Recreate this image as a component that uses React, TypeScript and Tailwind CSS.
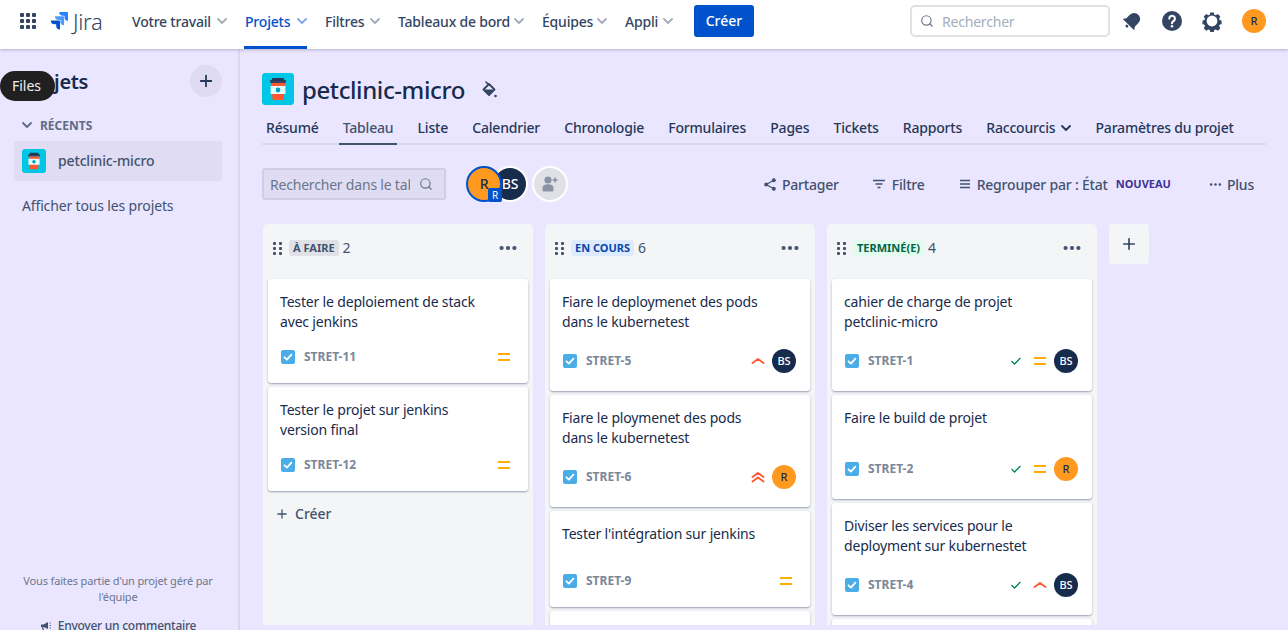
import { Plus, Search, MoreHorizontal } from "lucide-react";

const FONT = "font-['Noto_Sans',sans-serif]";

const Cup = ({ size }: { size: number }) => (
  <svg width={size} height={size} viewBox="0 0 32 32" className="shrink-0 rounded-[3px]">
    <rect width="32" height="32" rx="2" fill="#00C7E6" />
    <rect x="8" y="7" width="16" height="3" rx="1" fill="#344563" />
    <rect x="10" y="5" width="12" height="3" rx="1" fill="#253858" />
    <path d="M9 10h14l-1.600 17H10.600z" fill="#FF5630" />
    <rect x="8.600" y="13" width="14.800" height="8" fill="#E6FCFF" />
    <circle cx="16" cy="17" r="2.400" fill="#00A3BF" />
  </svg>
);

const Chevron = ({ color = "#A5ADBA" }: { color?: string }) => (
  <svg width="10" height="8" viewBox="0 0 10 8" className="shrink-0">
    <path d="M1 2l4 4 4-4" fill="none" stroke={color} strokeWidth="1.800" strokeLinecap="round" strokeLinejoin="round" />
  </svg>
);

const NavItem = ({ label, w, active }: { label: string; w: string; active?: boolean }) => (
  <div className={`relative flex h-[42px] items-center justify-between text-sm font-medium ${w} ${active ? "text-[#0052CC]" : "text-[#344563]"}`}>
    <span className="pt-[2px] tracking-[-0.2px]">{label}</span>
    <Chevron color={active ? "#7FA8E5" : "#A5ADBA"} />
    {active && <div className="absolute -bottom-[7px] -left-px right-0 h-[3px] bg-[#0052CC]" />}
  </div>
);

const TopBar = () => (
  <header className="relative z-10 flex h-[49px] shrink-0 items-center bg-white pr-[22px] pb-[7px] pl-5 shadow-[0_1px_3px_rgba(9,30,66,0.25)]">
    <div className="grid w-4 grid-cols-3 gap-[2px]">
      {Array.from({ length: 9 }).map((_, i) => (
        <span key={i} className="h-1 w-1 rounded-[1px] bg-[#344563]" />
      ))}
    </div>
    <svg width="18" height="18" viewBox="0 0 18 18" className="ml-[14px]">
      <path d="M17.500 0H9.200a3.800 3.800 0 0 0 3.800 3.800h1.500v1.500A3.800 3.800 0 0 0 18 9V.6z" fill="#2684FF" />
      <path d="M13.400 4.200H5a3.800 3.800 0 0 0 3.800 3.800h1.600v1.400a3.800 3.800 0 0 0 3.700 3.800V4.900z" fill="#4C9AFF" />
      <path d="M9.200 8.400H.8a3.800 3.800 0 0 0 3.800 3.800h1.600v1.500A3.800 3.800 0 0 0 10 17.500V9.100z" fill="#0052CC" />
    </svg>
    <span className="ml-[5px] w-[29px] text-[22px] leading-none font-light tracking-[-0.3px] text-[#344563]">Jira</span>
    <div className="ml-[30px] flex items-center gap-[18px]">
      <NavItem label="Votre travail" w="w-[95px]" />
      <NavItem label="Projets" w="w-[62px]" active />
      <NavItem label="Filtres" w="w-[55px]" />
      <NavItem label="Tableaux de bord" w="w-[126px]" />
      <NavItem label="Équipes" w="w-[65px]" />
      <NavItem label="Appli" w="w-[48px]" />
    </div>
    <button className="ml-[21px] h-8 w-[60px] rounded-[3px] bg-[#0052CC] text-sm font-medium text-white">Créer</button>
    <div className="ml-auto flex h-8 w-[200px] items-center rounded-[5px] border-2 border-[#DFE1E6] bg-white pl-2">
      <Search size={14} className="text-[#6B778C]" />
      <span className="ml-2 pt-[2px] text-sm tracking-[-0.2px] text-[#A5ADBA]">Rechercher</span>
    </div>
    <svg width="24" height="24" viewBox="0 0 24 24" className="ml-[10px]">
      <g transform="rotate(45 12 12)" fill="#344563">
        <path d="M12 3a6 6 0 0 0-6 6v5l-2 3h16l-2-3V9a6 6 0 0 0-6-6z" />
        <rect x="10.500" y="18" width="3" height="2.500" rx="1.200" />
      </g>
    </svg>
    <svg width="24" height="24" viewBox="0 0 24 24" className="ml-4">
      <circle cx="12" cy="12" r="10" fill="#344563" />
      <path d="M9.300 9.600a2.800 2.800 0 1 1 4.300 2.400c-1 .6-1.600 1.100-1.600 2.200" fill="none" stroke="#fff" strokeWidth="2.100" strokeLinecap="round" />
      <circle cx="12" cy="17.300" r="1.300" fill="#fff" />
    </svg>
    <svg width="24" height="24" viewBox="0 0 24 24" className="ml-4">
      <path d="M10 2.500h4l.6 2.700 1.700.7 2.400-1.400 2.800 2.800-1.400 2.400.7 1.700 2.200.6v4l-2.200.6-.7 1.700 1.400 2.400-2.800 2.800-2.400-1.400-1.700.7-.6 2.200h-4l-.6-2.200-1.700-.7-2.400 1.400-2.800-2.800 1.400-2.400-.7-1.700-2.200-.6v-4l2.200-.6.7-1.700-1.400-2.400 2.800-2.800 2.400 1.400 1.700-.7z" transform="translate(1.600 1.200) scale(.87)" fill="#344563" />
      <circle cx="12" cy="12" r="5.400" fill="#fff" />
    </svg>
    <div className="ml-[18px] flex h-6 w-6 items-center justify-center rounded-full bg-[#FF991F] text-[11px] font-medium text-[#172B4D]">R</div>
  </header>
);

const Sidebar = () => (
  <aside className="relative flex w-[240px] shrink-0 flex-col overflow-hidden border-r-2 border-[#DAD7EE] bg-[#EAE6FF] pr-4 pl-[14px]">
    <div className="mt-4 flex h-8 shrink-0 items-center justify-between pl-2">
      <span className="pt-[2px] text-xl font-semibold tracking-[-0.3px] text-[#172B4D]">Projets</span>
      <div className="flex h-8 w-8 items-center justify-center rounded-full bg-[#DEDBF2]">
        <Plus size={18} strokeWidth={2.400} className="text-[#253858]" />
      </div>
    </div>
    <div className="mt-[20px] flex h-4 shrink-0 items-center gap-2 pl-2 text-xs font-bold text-[#5E6C84]">
      <Chevron color="#5E6C84" />
      <span className="pt-[2px]">RÉCENTS</span>
    </div>
    <div className="mt-2 flex h-10 shrink-0 items-center gap-3 rounded-[3px] bg-[#DFDCF3] pl-2">
      <Cup size={24} />
      <span className="text-sm font-medium tracking-[-0.15px] text-[#42526E]">petclinic-micro</span>
    </div>
    <div className="mt-[15px] shrink-0 pl-2 text-sm tracking-[-0.15px] text-[#42526E]">Afficher tous les projets</div>
    <p className="mt-[357px] shrink-0 text-center text-[11px] leading-4 tracking-[-0.15px] text-[#6B778C]">
      Vous faites partie d'un projet géré par
      <br />
      l'équipe
    </p>
    <div className="mt-[13px] flex shrink-0 items-center justify-center gap-[6px] text-xs font-medium tracking-[-0.25px] whitespace-nowrap text-[#42526E]">
      <svg width="12" height="12" viewBox="0 0 12 12">
        <path d="M1 4.500h2.500L8 2v7L3.500 7H3l1 3H2.800L1.700 7H1z" fill="#42526E" />
        <path d="M9.500 3.500l1.500-.8M9.500 5.500H11M9.500 7.500l1.500.8" stroke="#42526E" strokeWidth=".8" />
      </svg>
      Envoyer un commentaire
    </div>
  </aside>
);

const TABS = ["Résumé", "Tableau", "Liste", "Calendrier", "Chronologie", "Formulaires", "Pages", "Tickets", "Rapports"];

const Tabs = () => (
  <div className="mt-[13px] mr-[22px] flex h-[27px] items-start gap-[24.2px] border-b-2 border-[#DAD7EE] pl-1 text-sm font-medium tracking-[-0.2px] text-[#253858]">
    {TABS.map((t) => (
      <div key={t} className={`relative h-[25px] whitespace-nowrap ${t === "Tableau" ? "text-[#42526E]" : ""}`}>
        {t}
        {t === "Tableau" && <div className="absolute -right-1 -bottom-0.5 -left-1 h-0.5 bg-[#42526E]" />}
      </div>
    ))}
    <div className="flex h-5 items-center gap-[6px]">
      Raccourcis <Chevron color="#253858" />
    </div>
    <div className="whitespace-nowrap">Paramètres du projet</div>
  </div>
);

const Toolbar = () => (
  <div className="mt-[23px] flex h-8 items-center pr-[34px] text-sm font-medium tracking-[-0.2px] text-[#42526E]">
    <div className="flex h-8 w-[184px] items-center rounded-[3px] border-2 border-[#CFCEE6] bg-[#DFDCF3] pr-[11px] pl-1.5">
      <span className="w-[140px] overflow-hidden pt-[2px] text-sm font-normal whitespace-nowrap text-[#6B778C]">Rechercher dans le tableau</span>
      <Search size={14} className="ml-auto text-[#6B778C]" />
    </div>
    <div className="relative ml-5 flex items-center">
      <div className="relative z-10 flex h-9 w-9 items-center justify-center rounded-full border-2 border-[#0052CC] bg-[#FF991F] text-sm font-medium text-[#172B4D]">
        R
        <span className="absolute -right-[2px] -bottom-[2px] flex h-[14px] w-[14px] items-center justify-center rounded-[2px] bg-[#0052CC] text-[10px] font-normal text-white">R</span>
      </div>
      <div className="-ml-2.5 flex h-9 w-9 items-center justify-center rounded-full border-2 border-white bg-[#172B4D] text-sm font-medium text-white">BS</div>
      <div className="ml-1 flex h-9 w-9 items-center justify-center rounded-full border-2 border-white bg-[#DFE1E6]">
        <svg width="20" height="20" viewBox="0 0 20 20" fill="#8993A4">
          <circle cx="8" cy="6" r="3.600" />
          <path d="M2.500 14c0-2.600 2.400-3.800 5.500-3.800s5.500 1.200 5.500 3.800v2a1.500 1.500 0 0 1-1.500 1.500H4A1.500 1.500 0 0 1 2.500 16z" />
          <path d="M15 3.500v5M12.500 6h5" stroke="#8993A4" strokeWidth="1.600" />
        </svg>
      </div>
    </div>
    <div className="ml-auto flex items-center gap-[6px]">
      <svg width="12" height="13" viewBox="0 0 12 13" fill="#42526E" stroke="#42526E" strokeWidth="1.200">
        <path d="M9.800 2.200L2.200 6.500l7.600 4.300" fill="none" />
        <circle cx="9.800" cy="2.200" r="1.400" />
        <circle cx="2.200" cy="6.500" r="1.400" />
        <circle cx="9.800" cy="10.800" r="1.400" />
      </svg>
      <span className="pt-[2px]">Partager</span>
    </div>
    <div className="ml-[34px] flex items-center gap-[7px]">
      <svg width="12" height="10" viewBox="0 0 12 10" stroke="#42526E" strokeWidth="1.400">
        <path d="M0 1.500h12M2.500 5h7M4.500 8.500h3" />
      </svg>
      <span className="pt-[2px]">Filtre</span>
    </div>
    <div className="ml-[35px] flex items-center gap-[7px]">
      <svg width="10" height="10" viewBox="0 0 10 10" stroke="#42526E" strokeWidth="1.300">
        <path d="M0 1.500h10M0 5h10M0 8.500h10" />
      </svg>
      <span className="pt-[2px]">Regrouper par : État</span>
    </div>
    <span className="ml-2 text-[11px] font-bold tracking-normal text-[#403294]">NOUVEAU</span>
    <div className="ml-[37px] flex items-center gap-[4px]">
      <MoreHorizontal size={15} strokeWidth={2.200} />
      <span className="pt-[2px]">Plus</span>
    </div>
  </div>
);

const Priority = ({ kind }: { kind: "medium" | "high" | "highest" }) => {
  if (kind === "medium")
    return (
      <svg width="14" height="12" viewBox="0 0 14 12" stroke="#FFAB00" strokeWidth="2" className="shrink-0">
        <path d="M1 3h12M1 9h12" />
      </svg>
    );
  return (
    <svg width="14" height="12" viewBox="0 0 14 12" fill="none" stroke="#FF5630" strokeWidth="1.800" strokeLinecap="round" strokeLinejoin="round" className="shrink-0">
      {kind === "high" ? <path d="M1.500 8L7 4l5.500 4" /> : <path d="M1.500 6L7 2l5.500 4M1.500 10.500L7 6.500l5.500 4" />}
    </svg>
  );
};

type Task = {
  title: string[];
  id: string;
  priority: "medium" | "high" | "highest";
  who?: "BS" | "R";
  done?: boolean;
};

const Card = ({ task }: { task: Task }) => (
  <div className="shrink-0 rounded-[3px] bg-white pt-[13px] pr-[14px] pb-[14px] pl-3 shadow-[0_1px_2px_rgba(9,30,66,0.4)]">
    <div className="min-h-8 text-sm leading-5 tracking-[-0.17px] text-[#172B4D]">
      {task.title.map((line) => (
        <div key={line}>{line}</div>
      ))}
    </div>
    <div className={`mt-[13px] flex items-center ${task.who ? "h-8" : "h-6"}`}>
      <svg width="14" height="14" viewBox="0 0 14 14" className="mr-[9px] ml-px shrink-0">
        <rect width="14" height="14" rx="2" fill="#4BADE8" />
        <path d="M3.500 7.300l2.400 2.300 4.500-5" fill="none" stroke="#fff" strokeWidth="1.800" strokeLinecap="round" strokeLinejoin="round" />
      </svg>
      <span className="text-xs font-bold text-[#7A869A]">{task.id}</span>
      <div className={`ml-auto flex items-center ${task.who ? "" : "mr-[3px]"}`}>
        {task.done && (
          <svg width="12" height="10" viewBox="0 0 12 10" fill="none" stroke="#00875A" strokeWidth="1.300" className="mr-[11px]">
            <path d="M1.500 5l3 3 6-6" />
          </svg>
        )}
        <Priority kind={task.priority} />
        {task.who && (
          <div className={`ml-[7px] flex h-6 w-6 items-center justify-center rounded-full text-[11px] font-medium ${task.who === "BS" ? "bg-[#172B4D] text-white" : "bg-[#FF991F] text-[#172B4D]"}`}>
            {task.who}
          </div>
        )}
      </div>
    </div>
  </div>
);

const COLUMNS = [
  {
    name: "À FAIRE",
    count: 2,
    badge: "bg-[#DFE1E6] text-[#42526E]",
    tasks: [
      { title: ["Tester le deploiement de stack", "avec jenkins"], id: "STRET-11", priority: "medium" },
      { title: ["Tester le projet sur jenkins", "version final"], id: "STRET-12", priority: "medium" },
    ] as Task[],
    create: true,
  },
  {
    name: "EN COURS",
    count: 6,
    badge: "bg-[#DEEBFF] text-[#0747A6]",
    tasks: [
      { title: ["Fiare le deploymenet des pods", "dans le kubernetest"], id: "STRET-5", priority: "high", who: "BS" },
      { title: ["Fiare le ploymenet des pods", "dans le kubernetest"], id: "STRET-6", priority: "highest", who: "R" },
      { title: ["Tester l'intégration sur jenkins"], id: "STRET-9", priority: "medium" },
    ] as Task[],
    more: true,
  },
  {
    name: "TERMINÉ(E)",
    count: 4,
    badge: "bg-[#E3FCEF] text-[#006644]",
    tasks: [
      { title: ["cahier de charge de projet", "petclinic-micro"], id: "STRET-1", priority: "medium", who: "BS", done: true },
      { title: ["Faire le build de projet"], id: "STRET-2", priority: "medium", who: "R", done: true },
      { title: ["Diviser les services pour le", "deployment sur kubernestet"], id: "STRET-4", priority: "high", who: "BS", done: true },
    ] as Task[],
    more: true,
  },
];

const Board = () => (
  <div className="mt-6 flex items-start gap-3 pl-px">
    {COLUMNS.map((col) => (
      <section key={col.name} className="flex h-[401px] w-[270px] shrink-0 flex-col overflow-hidden rounded-t-[5px] bg-[#F4F5F7]">
        <div className="flex h-12 shrink-0 items-center pr-[14px] pl-[10px]">
          <div className="mr-[7px] grid grid-cols-2 gap-x-[3px] gap-y-[2px]">
            {Array.from({ length: 6 }).map((_, i) => (
              <span key={i} className="h-[3px] w-[3px] rounded-[1px] bg-[#42526E]" />
            ))}
          </div>
          <span className={`rounded-[3px] px-1 text-[11px] leading-4 font-bold ${col.badge}`}>{col.name}</span>
          <span className="ml-1 text-sm text-[#42526E]">{col.count}</span>
          <MoreHorizontal size={22} strokeWidth={2.600} className="ml-auto text-[#42526E]" />
        </div>
        <div className="mt-[7px] flex flex-col gap-1 px-[5px]">
          {col.tasks.map((t) => (
            <Card key={t.id} task={t} />
          ))}
          {col.more && <div className="h-10 shrink-0 rounded-[3px] bg-white shadow-[0_1px_2px_rgba(9,30,66,0.4)]" />}
        </div>
        {col.create && (
          <div className="mt-[13px] flex items-center gap-[6px] pl-3 text-sm font-medium text-[#42526E]">
            <Plus size={14} strokeWidth={2.200} />
            Créer
          </div>
        )}
      </section>
    ))}
    <div className="flex h-10 w-10 shrink-0 items-center justify-center rounded-[3px] bg-[#F4F5F7]">
      <Plus size={18} strokeWidth={2.200} className="text-[#344563]" />
    </div>
  </div>
);

export default function App() {
  return (
    <div className={`relative flex h-[630px] w-[1288px] flex-col overflow-hidden bg-[#EAE6FF] ${FONT}`}>
      <TopBar />
      <div className="flex min-h-0 flex-1">
        <Sidebar />
        <main className="min-w-0 flex-1 pl-[22px]">
          <div className="mt-6 flex h-8 items-center">
            <Cup size={32} />
            <h1 className="ml-2 pt-[2px] text-2xl font-medium tracking-[-0.4px] text-[#172B4D]">petclinic-micro</h1>
            <svg width="15" height="17" viewBox="0 0 15 17" className="ml-[17px]" fill="#344563">
              <path d="M4 1l3 3" stroke="#344563" strokeWidth="1.600" strokeLinecap="round" />
              <path d="M7 3L1.500 8.500 7 14l5.500-5.500z" fill="none" stroke="#344563" strokeWidth="1.800" strokeLinejoin="round" />
              <path d="M1.500 8.500h11L7 14z" />
              <circle cx="13.500" cy="15" r="1.300" />
            </svg>
          </div>
          <Tabs />
          <Toolbar />
          <Board />
        </main>
      </div>
      <div className="absolute top-[71px] left-0 z-20 flex h-[30px] w-[55px] items-center justify-center rounded-[15px] bg-[#202020] pr-[2px] text-sm text-[#f0f0f0]">Files</div>
    </div>
  );
}
